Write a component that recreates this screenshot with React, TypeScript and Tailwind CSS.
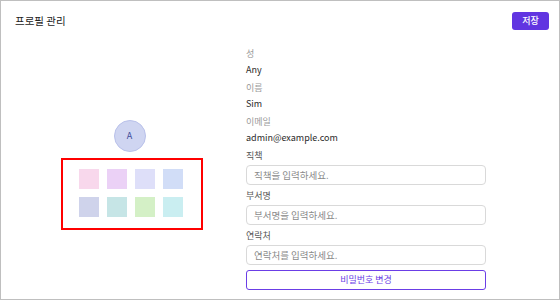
import React from "react";

const swatches = [
  "bg-[#f8d8ec]",
  "bg-[#ebd1f6]",
  "bg-[#dedff9]",
  "bg-[#d1ddf7]",
  "bg-[#cfd3eb]",
  "bg-[#c6e5e6]",
  "bg-[#d4f0c6]",
  "bg-[#caeef1]",
];

function Label({ children, muted }: { children: React.ReactNode; muted?: boolean }) {
  return (
    <div className={`h-[16px] leading-[16px] text-[9px] ${muted ? "text-[#9a9a9a]" : "text-[#555]"}`}>
      {children}
    </div>
  );
}

function Value({ children }: { children: React.ReactNode }) {
  return <div className="h-[18px] leading-[16px] text-[9px] text-[#2a2a2a]">{children}</div>;
}

function Field({ label, placeholder }: { label: string; placeholder: string }) {
  return (
    <div className="flex flex-col">
      <Label>{label}</Label>
      <input
        placeholder={placeholder}
        className="mt-[1px] h-[20px] w-full rounded-[4px] border border-[#d9d9d9] px-[7px] text-[9.5px] outline-none placeholder:text-[#8a8a8a]"
      />
    </div>
  );
}

export default function App() {
  return (
    <div
      className="flex h-[300px] w-[560px] flex-col border border-[#bfbfbf] bg-white text-[#222]"
      style={{ fontFamily: '"Noto Sans CJK KR", "Noto Sans", sans-serif' }}
    >
      <div className="flex h-[40px] items-center justify-between pl-[14px] pr-[10px]">
        <h1 className="text-[10.5px] font-normal text-[#222]">프로필 관리</h1>
        <button className="h-[18px] w-[37px] rounded-[3px] bg-[#6135e1] text-[9px] font-medium text-white">
          저장
        </button>
      </div>

      <div className="flex flex-1">
        <div className="flex w-[245px] flex-col items-center justify-center pl-[16px] pt-[10px]">
          <div className="mr-[4px] flex h-[32px] w-[32px] items-center justify-center rounded-full border border-[#b9c1ea] bg-[#cfd5f1] text-[9px] text-[#3c4a9a]">
            A
          </div>
          <div className="mt-[6px] h-[72px] w-[142px] border-2 border-[#ff0000] pl-[16px] pt-[9px]">
            <div className="grid w-fit grid-cols-4 gap-[8px]">
              {swatches.map((c) => (
                <div key={c} className={`h-[20px] w-[20px] ${c}`} />
              ))}
            </div>
          </div>
        </div>

        <div className="flex w-[240px] flex-col pt-[5px]">
          <Label muted>성</Label>
          <Value>Any</Value>
          <Label muted>이름</Label>
          <Value>Sim</Value>
          <Label muted>이메일</Label>
          <Value>admin@example.com</Value>
          <div className="flex flex-col gap-[3px]">
            <Field label="직책" placeholder="직책을 입력하세요." />
            <Field label="부서명" placeholder="부서명을 입력하세요." />
            <Field label="연락처" placeholder="연락처를 입력하세요." />
          </div>
          <button className="mt-[5px] h-[20px] w-full rounded-[3px] border border-[#6b3ee6] text-[9px] text-[#6b3ee6]">
            비밀번호 변경
          </button>
        </div>
      </div>
    </div>
  );
}
